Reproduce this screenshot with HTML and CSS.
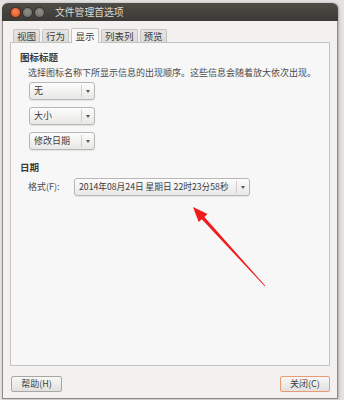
FILE: index.html
```html
<!DOCTYPE html>
<html lang="zh-CN">
<head>
<meta charset="utf-8">
<title>文件管理首选项</title>
<link rel="stylesheet" href="styles.css">
</head>
<body>
<div class="window">
  <div class="titlebar">
    <div class="controls">
      <span class="ctl close"></span>
      <span class="ctl"></span>
      <span class="ctl"></span>
    </div>
    <span class="title">文件管理首选项</span>
  </div>
  <div class="main">
    <div class="tabs">
      <span class="tab">视图</span>
      <span class="tab">行为</span>
      <span class="tab active">显示</span>
      <span class="tab">列表列</span>
      <span class="tab">预览</span>
    </div>
    <div class="frame">
      <div class="heading">图标标题</div>
      <div class="desc">选择图标名称下所显示信息的出现顺序。这些信息会随着放大依次出现。</div>
      <div class="combos">
        <div class="combo small"><span class="val">无</span><span class="drop"><i class="tri"></i></span></div>
        <div class="combo small"><span class="val">大小</span><span class="drop"><i class="tri"></i></span></div>
        <div class="combo small"><span class="val">修改日期</span><span class="drop"><i class="tri"></i></span></div>
      </div>
      <div class="heading h2">日期</div>
      <div class="daterow">
        <span class="label">格式(F):</span>
        <div class="combo wide"><span class="val date">2014年08月24日 星期日 22时23分58秒</span><span class="drop"><i class="tri"></i></span></div>
      </div>
    </div>
    <div class="buttons">
      <span class="btn">帮助(H)</span>
      <span class="btn default">关闭(C)</span>
    </div>
  </div>
</div>
<svg class="arrow" width="344" height="400" viewBox="0 0 344 400">
  <polygon points="193,207 207.5,214.1 204.4,216.9 265.3,285.7 264.7,286.3 201.8,219.3 198.7,222.1" fill="#f01c1c"/>
</svg>
</body>
</html>
```
FILE: styles.css
```css
html, body {
  margin: 0;
  padding: 0;
}
body {
  width: 344px;
  height: 400px;
  background: #e4e3e1;
  position: relative;
  overflow: hidden;
  font-family: "Noto Sans CJK SC", "Noto Sans", sans-serif;
  color: #3c3c3c;
}
.window {
  margin: 3px 0 0 2px;
  width: 336px;
  height: 396px;
  box-sizing: border-box;
  background: #f2f1f0;
  border: 1px solid #8c8b87;
  border-top: none;
  border-radius: 6px 6px 0 0;
  box-shadow: 1px 0 3px rgba(0,0,0,0.25);
  display: flex;
  flex-direction: column;
}
.titlebar {
  height: 18px;
  background: linear-gradient(#4d4c47, #3b3a36);
  border-radius: 6px 6px 0 0;
  margin: 0 -1px;
  display: flex;
  align-items: center;
  padding-left: 8px;
}
.controls {
  display: flex;
  gap: 1px;
}
.ctl {
  width: 9px;
  height: 9px;
  border-radius: 50%;
  background: radial-gradient(circle at 50% 40%, #8e8d88, #6a6964);
  border: 0.5px solid #33322e;
}
.ctl.close {
  background: radial-gradient(circle at 50% 40%, #f48a5a, #df4a1e);
  border-color: #5a2a18;
}
.title {
  margin-left: 10px;
  font-size: 9.8px;
  line-height: 12px;
  color: #dfdbd2;
}
.main {
  flex: 1;
  display: flex;
  flex-direction: column;
  padding: 7px 7px 0 7px;
}
.tabs {
  display: flex;
  align-items: flex-end;
  gap: 2px;
  height: 15px;
  margin-bottom: -1px;
  padding-left: 3px;
  position: relative;
  z-index: 1;
}
.tab {
  box-sizing: border-box;
  height: 13px;
  margin-bottom: 1px;
  padding: 0 3px;
  font-size: 9.5px;
  line-height: 12px;
  background: linear-gradient(#e6e5e3, #dcdad7);
  border: 1px solid #c6c4c0;
  border-bottom: none;
  border-radius: 2px 2px 0 0;
  color: #3c3c3c;
}
.tab.active {
  height: 15px;
  margin-bottom: 0;
  padding: 1px 3.5px 0;
  background: #f7f7f7;
}
.frame {
  box-sizing: border-box;
  height: 324px;
  background: #f7f7f7;
  border: 1px solid #c6c4c0;
  padding: 8px 0 0 9px;
}
.heading {
  font-size: 9.5px;
  line-height: 12px;
  font-weight: bold;
  color: #3a3a3a;
}
.heading.h2 {
  margin-top: 11px;
}
.desc {
  margin-top: 4px;
  padding-left: 8px;
  font-size: 9px;
  line-height: 12px;
  color: #4a4a4a;
  white-space: nowrap;
}
.combos {
  margin-top: 3px;
  padding-left: 9px;
  display: flex;
  flex-direction: column;
  gap: 7px;
}
.combo {
  box-sizing: border-box;
  height: 18px;
  display: flex;
  align-items: stretch;
  background: linear-gradient(#fcfcfc, #e9e8e6);
  border: 1px solid #b9b7b3;
  border-radius: 3px;
  box-shadow: 0 1px 1px rgba(0,0,0,0.08);
}
.combo.small {
  width: 66px;
}
.combo.wide {
  width: 176px;
}
.val {
  flex: 1;
  padding-left: 4px;
  font-size: 9px;
  line-height: 16px;
  color: #3c3c3c;
  white-space: nowrap;
}
.val.date {
  font-size: 8.7px;
}
.drop {
  width: 12px;
  border-left: 1px solid #cfcdc9;
  display: flex;
  align-items: center;
  justify-content: center;
  margin: 2px 0;
}
.tri {
  width: 0;
  height: 0;
  border-left: 2.5px solid transparent;
  border-right: 2.5px solid transparent;
  border-top: 3px solid #555;
}
.daterow {
  margin-top: 5px;
  padding-left: 8px;
  display: flex;
  align-items: center;
}
.label {
  width: 46px;
  font-size: 9px;
  line-height: 12px;
  color: #4a4a4a;
}
.buttons {
  display: flex;
  justify-content: space-between;
  margin-top: 10px;
  padding: 0 0 0 1px;
}
.btn {
  box-sizing: border-box;
  width: 51px;
  height: 16px;
  font-size: 9px;
  line-height: 14px;
  text-align: center;
  background: linear-gradient(#f7f7f6, #e2e1df);
  border: 1px solid #a9a7a3;
  border-radius: 2px;
  color: #3c3c3c;
}
.btn.default {
  width: 50px;
  border-color: #e99a73;
}
.arrow {
  position: absolute;
  left: 0;
  top: 0;
  pointer-events: none;
}
```
